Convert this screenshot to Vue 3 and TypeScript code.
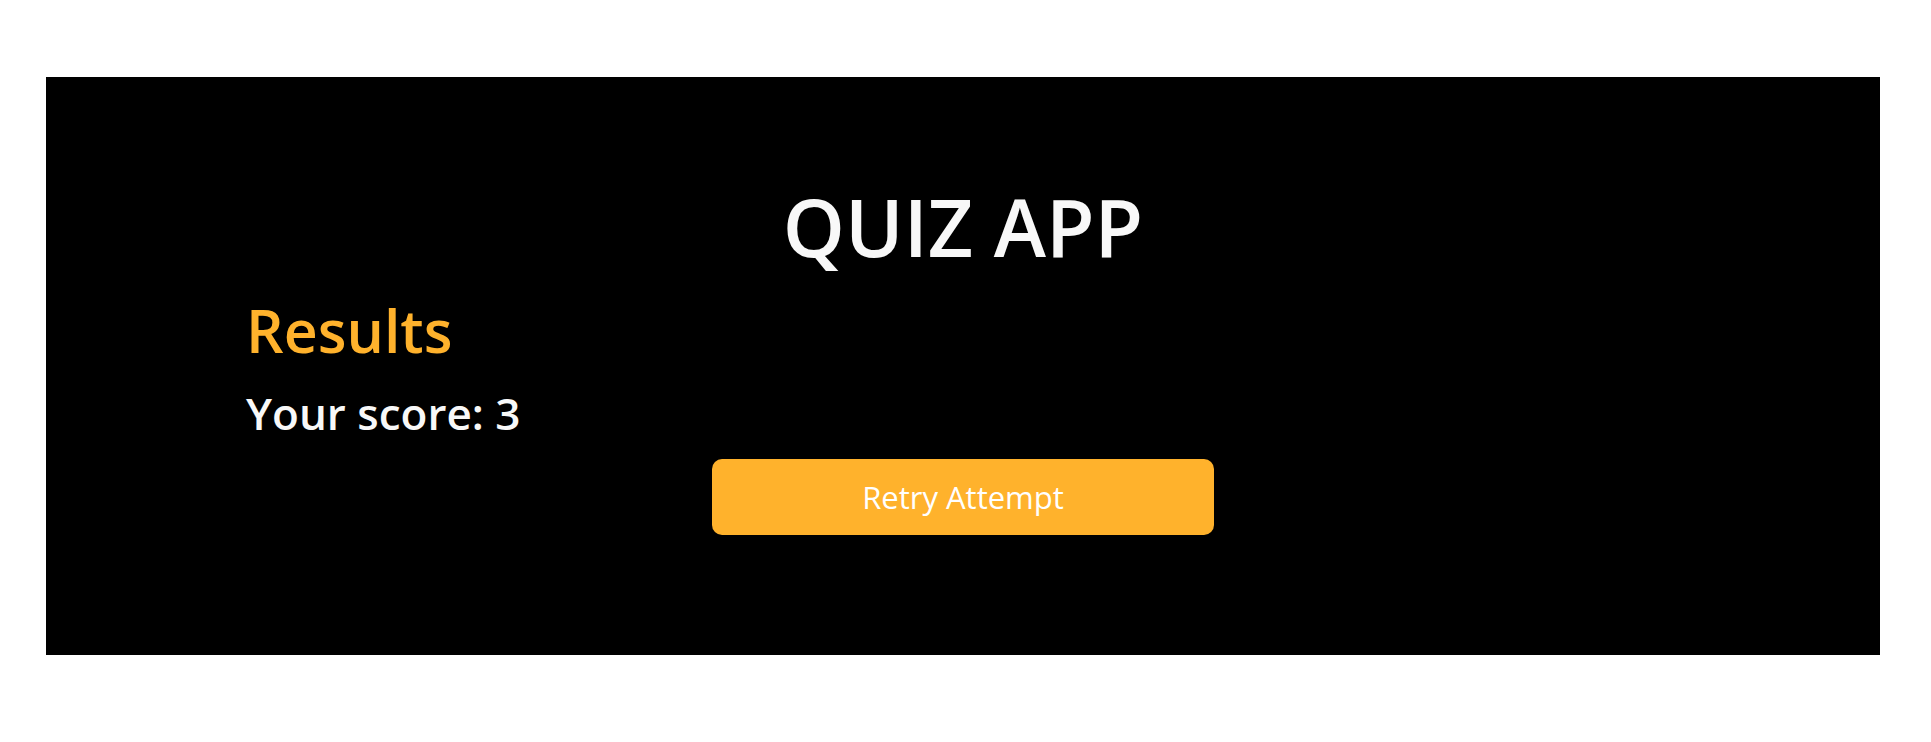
<script setup lang="ts">
import { ref } from 'vue'

const score = ref<number>(3)

function retry(): void {
  score.value = 0
}
</script>

<template>
  <main class="page">
    <section class="quiz">
      <h1 class="title">QUIZ APP</h1>
      <div class="results">
        <h2 class="heading">Results</h2>
        <h3 class="score">Your score: {{ score }}</h3>
        <button class="retry" type="button" @click="retry">Retry Attempt</button>
      </div>
    </section>
  </main>
</template>

<style>
body {
  background: #fff;
}
</style>

<style scoped>
.page {
  padding: 77px 51px 86px 46px;
  font-family: "Segoe UI", "Open Sans", "Noto Sans", sans-serif;
}

.quiz {
  padding: 102px 200px 120px;
  background: #000;
  color: #f8f8f8;
}

.title {
  margin: 0;
  font-size: 79px;
  font-weight: 600;
  line-height: 96px;
  text-align: center;
}

.results {
  display: flex;
  flex-direction: column;
}

.heading {
  margin: 17px 0 0;
  color: #ffb22c;
  font-size: 59px;
  font-weight: 600;
  line-height: 76px;
}

.score {
  margin: 16px 0 17px;
  font-size: 44px;
  font-weight: 600;
  line-height: 58px;
}

.retry {
  align-self: center;
  width: 502px;
  max-width: 100%;
  height: 76px;
  border: 0;
  border-radius: 10px;
  background: #ffb22c;
  color: #fff;
  font-family: inherit;
  font-size: 31px;
  cursor: pointer;
}
</style>
